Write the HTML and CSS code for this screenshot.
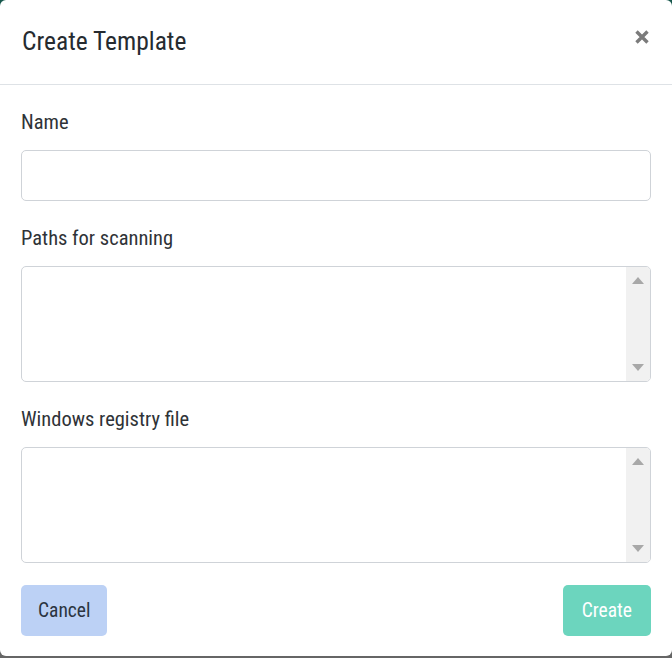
FILE: index.html
```html
<!DOCTYPE html>
<html lang="en">
<head>
<meta charset="utf-8">
<title>Create Template</title>
<link rel="stylesheet" href="styles.css">
</head>
<body>
<div class="modal">
  <div class="modal-header">
    <h5 class="modal-title">Create Template</h5>
    <button class="close" type="button" aria-label="Close">
      <svg width="16" height="16" viewBox="0 0 16 16" aria-hidden="true"><path d="M2.5 2.5L13.5 13.5M13.5 2.5L2.5 13.5" stroke="#7b7b7b" stroke-width="3.4" stroke-linecap="butt"/></svg>
    </button>
  </div>
  <div class="modal-body">
    <div class="form-group">
      <label class="form-label">Name</label>
      <input class="form-control" type="text">
    </div>
    <div class="form-group">
      <label class="form-label">Paths for scanning</label>
      <div class="area-wrap">
        <textarea class="area"></textarea>
        <div class="scrollbar" aria-hidden="true"><span class="arrow up"></span><span class="arrow down"></span></div>
      </div>
    </div>
    <div class="form-group last">
      <label class="form-label">Windows registry file</label>
      <div class="area-wrap">
        <textarea class="area"></textarea>
        <div class="scrollbar" aria-hidden="true"><span class="arrow up"></span><span class="arrow down"></span></div>
      </div>
    </div>
  </div>
  <div class="modal-footer">
    <button class="btn btn-cancel" type="button">Cancel</button>
    <button class="btn btn-create" type="button">Create</button>
  </div>
</div>
</body>
</html>
```
FILE: styles.css
```css
* { box-sizing: border-box; }
html, body { height: 100%; }
body {
  margin: 0;
  background: linear-gradient(#17574c 0%, #2c5f57 60%, #666 100%);
  font-family: "Liberation Sans Narrow", "Roboto Condensed", "Liberation Sans", sans-serif;
  color: #2b2f33;
}
.modal {
  height: 656px;
  background: #fff;
  border-radius: 6px;
  display: flex;
  flex-direction: column;
}
.modal-header {
  height: 85px;
  border-bottom: 1px solid #dee2e6;
  display: flex;
  align-items: center;
  justify-content: space-between;
  padding: 0 22px 2px 22px;
}
.modal-title {
  margin: 0;
  font-size: 25.5px;
  font-weight: 400;
  color: #262b30;
}
.close {
  border: 0;
  background: none;
  padding: 0;
  margin: 0 0 9px 0;
  width: 16px;
  height: 16px;
  display: block;
}
.close svg { display: block; }
.modal-body {
  padding: 21px 21px 0 21px;
}
.form-group { margin-bottom: 21px; }
.form-group.last { margin-bottom: 22px; }
.form-label {
  display: block;
  font-size: 20.5px;
  line-height: 33px;
  margin-bottom: 11px;
  color: #2f3337;
}
.form-control {
  display: block;
  width: 100%;
  height: 51px;
  border: 1px solid #cfd3d8;
  border-radius: 5px;
  background: #fff;
  margin: 0;
  font-family: inherit;
  font-size: 20px;
  padding: 6px 14px;
}
.area-wrap {
  display: flex;
  height: 116px;
  border: 1px solid #cfd3d8;
  border-radius: 5px;
  overflow: hidden;
  background: #fff;
}
.area {
  flex: 1;
  min-width: 0;
  border: 0;
  margin: 0;
  padding: 6px 14px;
  resize: none;
  overflow: hidden;
  outline: none;
  font-family: inherit;
  font-size: 20px;
  background: transparent;
}
.scrollbar {
  width: 24px;
  background: #f1f1f1;
  display: flex;
  flex-direction: column;
  justify-content: space-between;
  align-items: center;
  padding: 10px 0;
}
.arrow {
  width: 0;
  height: 0;
  border-left: 6px solid transparent;
  border-right: 6px solid transparent;
}
.arrow.up { border-bottom: 7px solid #a8a8a8; }
.arrow.down { border-top: 7px solid #a8a8a8; }
.modal-footer {
  display: flex;
  justify-content: space-between;
  padding: 0 21px;
}
.btn {
  height: 51px;
  border: 0;
  border-radius: 5px;
  font-family: inherit;
  font-size: 19.5px;
  padding: 0 17px;
}
.btn-cancel {
  background: #bcd1f5;
  color: #2b3440;
}
.btn-create {
  background: #6cd5be;
  color: #fff;
  padding: 0 19px;
}
```
